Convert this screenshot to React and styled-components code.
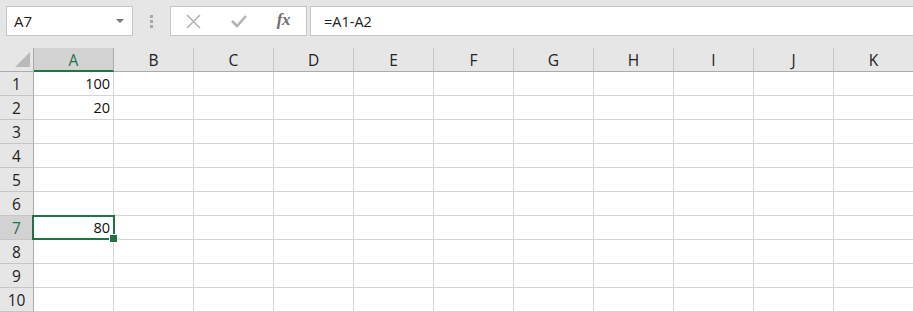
import React from "react";
import styled, { createGlobalStyle, css } from "styled-components";

const Global = createGlobalStyle`
  html, body { margin: 0; padding: 0; background: #ffffff; overflow: hidden; }
  * { box-sizing: border-box; }
`;

const GREEN = "#217346";
const COLS = ["A", "B", "C", "D", "E", "F", "G", "H", "I", "J", "K"];
const DATA = { "A1": "100", "A2": "20", "A7": "80" };
const SEL = { col: "A", row: 7 };

const Page = styled.div`
  width: 913px;
  height: 312px;
  display: flex;
  flex-direction: column;
  font-family: "Open Sans", "Liberation Sans", sans-serif;
  overflow: hidden;
`;

const Toolbar = styled.div`
  height: 48px;
  background: #e6e6e6;
  display: flex;
  align-items: flex-start;
  padding: 6px 0 0 6px;
  flex: none;
`;

const Box = styled.div`
  height: 30px;
  background: #ffffff;
  border: 1px solid #c6c6c6;
  display: flex;
  align-items: center;
`;

const NameBox = styled(Box)`
  width: 127px;
  padding: 0 8px 0 7px;
  justify-content: space-between;
  font-size: 15px;
  color: #222;
`;

const Caret = styled.span`
  width: 0;
  height: 0;
  border-left: 4px solid transparent;
  border-right: 4px solid transparent;
  border-top: 4px solid #777;
`;

const Grip = styled.div`
  width: 37px;
  height: 30px;
  display: flex;
  flex-direction: column;
  align-items: center;
  justify-content: center;
  gap: 2px;
  & > i {
    display: block;
    width: 3px;
    height: 3px;
    background: #a8a8a8;
  }
`;

const FxBox = styled(Box)`
  width: 137px;
  padding: 0 16px 0 15px;
  justify-content: space-between;
`;

const FxText = styled.span`
  font-family: "Liberation Serif", "DejaVu Serif", serif;
  font-style: italic;
  font-weight: bold;
  font-size: 17px;
  color: #6f6f6f;
  letter-spacing: -0.5px;
  margin-top: -2px;
`;

const FormulaBox = styled(Box)`
  flex: 1;
  margin-left: 3px;
  padding-left: 13px;
  font-size: 14.5px;
  color: #222;
  border-right: none;
`;

const Sheet = styled.div`
  display: grid;
  grid-template-columns: 34px repeat(11, 80px);
  grid-auto-rows: 24px;
  background: #ffffff;
  font-family: "Open Sans", "Liberation Sans", sans-serif;
`;

const Corner = styled.div`
  background: #e6e6e6;
  border-bottom: 1px solid #ababab;
  border-right: 1px solid #ababab;
  position: relative;
  &::after {
    content: "";
    position: absolute;
    right: 3px;
    bottom: 4px;
    width: 0;
    height: 0;
    border-left: 15px solid transparent;
    border-bottom: 15px solid #b9b9b9;
  }
`;

const ColHead = styled.div`
  background: ${(p) => (p.$sel ? "#d2d2d2" : "#e6e6e6")};
  border-right: 1px solid ${(p) => (p.$sel ? "#ababab" : "#c6c6c6")};
  border-bottom: ${(p) => (p.$sel ? `2px solid ${GREEN}` : "1px solid #ababab")};
  display: flex;
  align-items: center;
  justify-content: center;
  font-size: 15.5px;
  padding-top: ${(p) => (p.$sel ? "1px" : "0")};
  color: ${(p) => (p.$sel ? GREEN : "#222")};
`;

const RowHead = styled.div`
  background: ${(p) => (p.$sel ? "#d2d2d2" : "#e6e6e6")};
  border-right: 1px solid #ababab;
  border-bottom: 1px solid #c6c6c6;
  display: flex;
  align-items: center;
  justify-content: center;
  font-size: 15.5px;
  color: ${(p) => (p.$sel ? GREEN : "#222")};
`;

const Cell = styled.div`
  position: relative;
  border-right: 1px solid #d4d4d4;
  border-bottom: 1px solid #d4d4d4;
  display: flex;
  align-items: center;
  justify-content: flex-end;
  padding-right: 3px;
  font-size: 14.5px;
  color: #111;
  ${(p) =>
    p.$sel &&
    css`
      &::before {
        content: "";
        position: absolute;
        left: -2px;
        top: -1px;
        right: -2px;
        bottom: -1px;
        border: 2px solid ${GREEN};
        pointer-events: none;
      }
      &::after {
        content: "";
        position: absolute;
        right: -5px;
        bottom: -4px;
        width: 7px;
        height: 7px;
        background: ${GREEN};
        border: 1px solid #fff;
        z-index: 2;
      }
    `}
`;

const CancelIcon = () => (
  <svg width="15" height="15" viewBox="0 0 15 15">
    <path d="M1 1 L14 14 M14 1 L1 14" stroke="#b3b3b3" strokeWidth="1.6" fill="none" />
  </svg>
);

const CheckIcon = () => (
  <svg width="16" height="14" viewBox="0 0 16 14">
    <path d="M1 7 L6 12 L15 2" stroke="#b3b3b3" strokeWidth="2.6" fill="none" />
  </svg>
);

export default function App() {
  const rows = Array.from({ length: 10 }, (_, i) => i + 1);
  return (
    <Page>
      <Global />
      <Toolbar>
        <NameBox>
          <span>A7</span>
          <Caret />
        </NameBox>
        <Grip>
          <i />
          <i />
          <i />
        </Grip>
        <FxBox>
          <CancelIcon />
          <CheckIcon />
          <FxText>fx</FxText>
        </FxBox>
        <FormulaBox>=A1-A2</FormulaBox>
      </Toolbar>
      <Sheet>
        <Corner />
        {COLS.map((c) => (
          <ColHead key={c} $sel={c === SEL.col}>
            {c}
          </ColHead>
        ))}
        {rows.map((r) => (
          <React.Fragment key={r}>
            <RowHead $sel={r === SEL.row}>{r}</RowHead>
            {COLS.map((c) => (
              <Cell key={c} $sel={c === SEL.col && r === SEL.row}>
                {DATA[c + r] || ""}
              </Cell>
            ))}
          </React.Fragment>
        ))}
      </Sheet>
    </Page>
  );
}
